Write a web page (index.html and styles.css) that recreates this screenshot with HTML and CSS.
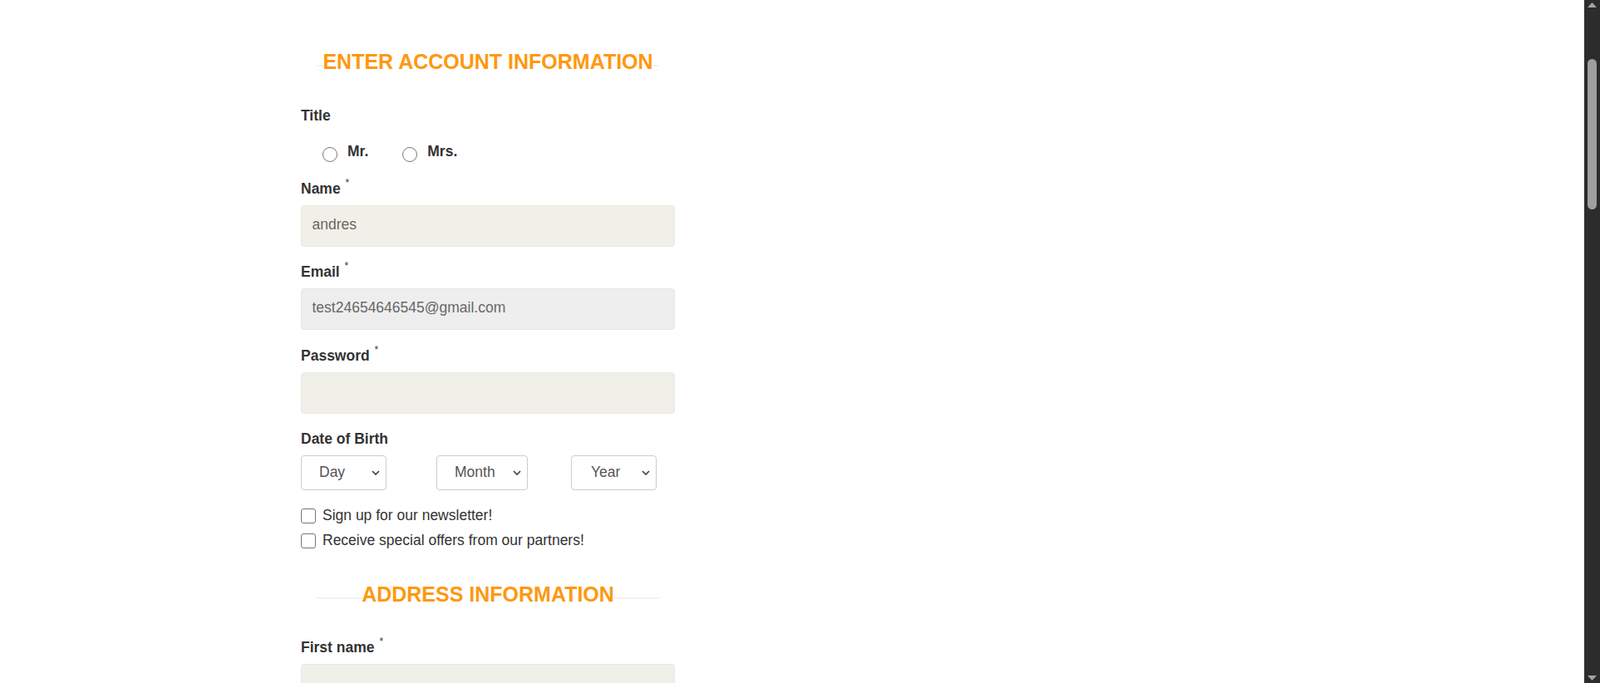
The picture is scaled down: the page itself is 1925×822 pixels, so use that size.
FILE: index.html
```html
<!DOCTYPE html>
<html lang="en">
<head>
<meta charset="utf-8">
<title>Signup</title>
<link rel="stylesheet" href="styles.css">
</head>
<body>
<div class="page">
  <main class="main">
    <form class="signup">
      <h2 class="title"><span class="rule"></span><span class="title-text">ENTER ACCOUNT INFORMATION</span><span class="rule"></span></h2>

      <div class="title-label">Title</div>
      <div class="radios">
        <label class="radio-opt"><input type="radio" name="title" class="radio">Mr.</label>
        <label class="radio-opt"><input type="radio" name="title" class="radio">Mrs.</label>
      </div>

      <div class="field">
        <label class="lbl">Name <span class="req">*</span></label>
        <input class="input" type="text" value="andres">
      </div>
      <div class="field">
        <label class="lbl">Email <span class="req">*</span></label>
        <input class="input input-disabled" type="text" value="test24654646545@gmail.com" disabled>
      </div>
      <div class="field">
        <label class="lbl">Password <span class="req">*</span></label>
        <input class="input" type="password" value="">
      </div>
      <div class="field field-dob">
        <label class="lbl">Date of Birth</label>
        <div class="dob">
          <div class="sel sel-day"><span>Day</span><svg class="chev" width="10" height="6" viewBox="0 0 10 6"><path d="M1 1 L5 5 L9 1" fill="none" stroke="#3a3a3a" stroke-width="1.6"/></svg></div>
          <div class="sel sel-month"><span>Month</span><svg class="chev" width="10" height="6" viewBox="0 0 10 6"><path d="M1 1 L5 5 L9 1" fill="none" stroke="#3a3a3a" stroke-width="1.6"/></svg></div>
          <div class="sel sel-year"><span>Year</span><svg class="chev" width="10" height="6" viewBox="0 0 10 6"><path d="M1 1 L5 5 L9 1" fill="none" stroke="#3a3a3a" stroke-width="1.6"/></svg></div>
        </div>
      </div>

      <div class="checks">
        <label class="check-row"><input type="checkbox" class="check">Sign up for our newsletter!</label>
        <label class="check-row"><input type="checkbox" class="check">Receive special offers from our partners!</label>
      </div>

      <h2 class="title title-address"><span class="rule"></span><span class="title-text">ADDRESS INFORMATION</span><span class="rule"></span></h2>

      <div class="field field-first">
        <label class="lbl">First name <span class="req">*</span></label>
        <input class="input" type="text" value="">
      </div>
    </form>
  </main>
  <div class="scrollbar">
    <div class="sb-arrow"><svg width="11" height="6" viewBox="0 0 11 6"><path d="M0 6 L5.5 0 L11 6 Z" fill="#a3a3a3"/></svg></div>
    <div class="sb-thumb"></div>
    <div class="sb-space"></div>
    <div class="sb-arrow sb-arrow-down"><svg width="11" height="6" viewBox="0 0 11 6"><path d="M0 0 L5.5 6 L11 0 Z" fill="#a3a3a3"/></svg></div>
  </div>
</div>
</body>
</html>
```

FILE: styles.css
```css
html, body {
  margin: 0;
  height: 100%;
  overflow: hidden;
}

body {
  font-family: "Liberation Sans", Arial, sans-serif;
  color: #333;
  background: #fff;
}

.page {
  display: flex;
  height: 100vh;
}

.main {
  flex: 1;
  padding: 59px 0 0 362px;
  overflow: hidden;
}

.signup {
  width: 450px;
  margin: 0;
}

.title {
  display: flex;
  align-items: flex-start;
  margin: 0 19px;
  font-size: 25px;
  line-height: 30px;
  font-weight: 700;
  color: #fe980f;
}

.rule {
  flex: 1;
  height: 2px;
  margin-top: 18.5px;
  background: #f2f2f2;
}

.title-label {
  margin-top: 37.5px;
  font-weight: 700;
  font-size: 17.5px;
  line-height: 25px;
}

.radios {
  display: flex;
  gap: 40.5px;
  margin: 18px 0 19.5px;
  padding-left: 25.5px;
}

.radio-opt {
  display: flex;
  align-items: flex-start;
  font-weight: 700;
  font-size: 17.5px;
  line-height: 25px;
}

.radio {
  appearance: none;
  -webkit-appearance: none;
  box-sizing: border-box;
  width: 18px;
  height: 18px;
  margin: 7.5px 12.5px 0 0;
  border: 1px solid #767676;
  border-radius: 50%;
  background: #fff;
}

.field {
  margin-bottom: 18.5px;
}

.lbl {
  display: block;
  font-weight: 700;
  font-size: 17.5px;
  line-height: 25px;
  margin-bottom: 7px;
}

.req {
  font-weight: 400;
  font-size: 12px;
  vertical-align: 9px;
  line-height: 0;
  margin-left: 1px;
}

.input {
  display: block;
  width: 100%;
  height: 50px;
  box-sizing: border-box;
  margin: 0;
  padding: 0 12.5px 3px;
  border: 1px solid #e9e9e3;
  border-radius: 4px;
  background: #f0f0e9;
  font-family: "Liberation Sans", Arial, sans-serif;
  font-size: 17.5px;
  color: #696763;
  outline: none;
}

.input-disabled {
  background: #eeeeee;
  border-color: #e6e6e6;
  color: #696763;
}

.field-dob {
  margin-bottom: 18px;
}

.dob {
  display: flex;
}

.sel {
  display: flex;
  align-items: center;
  justify-content: space-between;
  box-sizing: border-box;
  height: 42px;
  padding: 0 7px 1px 21px;
  border: 1px solid #cccccc;
  border-radius: 4px;
  background: #fff;
  font-size: 17.5px;
  color: #555;
}

.sel-day {
  width: 103px;
}

.sel-month {
  width: 110px;
  margin-left: 60px;
}

.sel-year {
  width: 103px;
  margin-left: 52px;
  padding-left: 23px;
}

.chev {
  display: block;
}

.checks {
  display: flex;
  flex-direction: column;
  gap: 5px;
}

.check-row {
  display: flex;
  align-items: flex-start;
  font-size: 17.5px;
  line-height: 25px;
  color: #333;
}

.check {
  appearance: none;
  -webkit-appearance: none;
  box-sizing: border-box;
  width: 18px;
  height: 18px;
  margin: 3.5px 8px 0 0;
  border: 1px solid #767676;
  border-radius: 3px;
  background: #fff;
}

.title-address {
  margin-top: 37.2px;
}

.field-first {
  margin-top: 37.3px;
}

.scrollbar {
  width: 19px;
  height: 100vh;
  background: #2c2c2c;
  display: flex;
  flex-direction: column;
  align-items: center;
}

.sb-arrow {
  height: 17px;
  display: flex;
  justify-content: center;
  align-items: flex-start;
  padding-top: 3px;
  box-sizing: border-box;
}

.sb-arrow-down {
  align-items: flex-end;
  padding-top: 0;
  padding-bottom: 3px;
}

.sb-thumb {
  width: 11px;
  height: 181px;
  margin-top: 54px;
  border-radius: 6px;
  background: #9f9f9f;
}

.sb-space {
  flex: 1;
}
```
